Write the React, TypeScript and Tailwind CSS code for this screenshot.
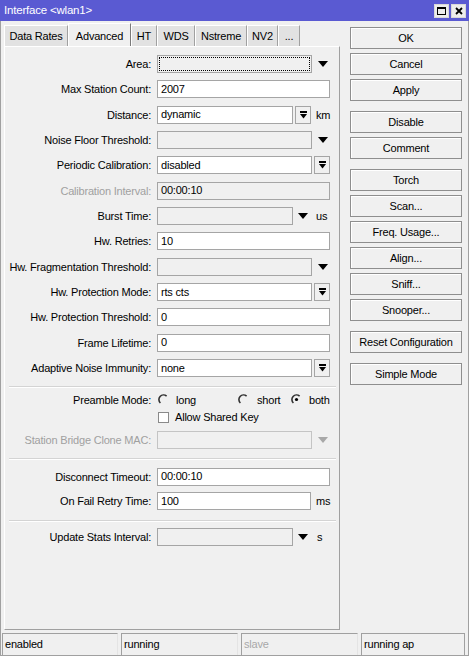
import React from "react";

const Arrow = ({ gray }: { gray?: boolean }) => (
  <svg width="10" height="6" viewBox="0 0 10 6" className="block">
    <polygon points="0,0 10,0 5,6" fill={gray ? "#a8a8a8" : "#000"} />
  </svg>
);

const BarArrow = () => (
  <svg width="7" height="8" viewBox="0 0 7 8" className="block">
    <rect x="0" y="0" width="7" height="2" fill="#000" />
    <polygon points="0,3 7,3 3.5,7.5" fill="#000" />
  </svg>
);

const ComboBtn = () => (
  <div className="h-[18px] w-[16px] border border-[#a5a5a5] bg-[#f0f0f0] flex items-center justify-center shrink-0">
    <BarArrow />
  </div>
);

function Box({
  w,
  value,
  white,
  dotted,
  faint,
}: {
  w: string;
  value?: string;
  white?: boolean;
  dotted?: boolean;
  faint?: boolean;
}) {
  return (
    <div
      className={`h-[18px] shrink-0 border ${faint ? "border-[#c4c4c4]" : "border-[#a5a5a5]"} ${
        white ? "bg-white" : "bg-[#f0f0f0]"
      } ${w} flex items-center`}
    >
      {dotted ? (
        <div className="m-[1px] h-[14px] w-full border border-dotted border-black" />
      ) : (
        <span className="pl-[3px] leading-none">{value}</span>
      )}
    </div>
  );
}

function Row({
  label,
  disabled,
  h = "h-[25.33px]",
  children,
}: {
  label?: string;
  disabled?: boolean;
  h?: string;
  children?: React.ReactNode;
}) {
  return (
    <div className={`flex items-center ${h}`}>
      <div className={`w-[146px] shrink-0 text-right ${disabled ? "text-[#a0a0a0]" : ""}`}>{label}</div>
      <div className="ml-[6px] flex items-center">{children}</div>
    </div>
  );
}

const Sep = ({ h }: { h: string }) => (
  <div className={`${h} flex items-center pl-[4px] pr-[3px]`}>
    <div className="w-full border-t border-[#d4d4d4] border-b border-b-white" />
  </div>
);

const Radio = ({ checked }: { checked?: boolean }) => (
  <svg width="11" height="11" viewBox="0 0 11 11" className="block shrink-0">
    <path d="M8.6 2.2 A4.6 4.6 0 1 0 2.4 9.0" fill="none" stroke="#303030" strokeWidth="1.6" />
    {checked && <circle cx="5.5" cy="5.5" r="1.6" fill="#000" />}
  </svg>
);

const Btn = ({ children }: { children: React.ReactNode }) => (
  <div className="h-[22px] border border-[#8e8e8e] shadow-[inset_1px_1px_0_#ffffff] flex items-center justify-center">
    {children}
  </div>
);

const Tab = ({ label, w, selected }: { label: string; w: string; selected?: boolean }) =>
  selected ? (
    <div
      className={`${w} h-[23px] bg-[#f0f0f0] border-l border-t border-white border-r border-r-[#7a7a7a] flex items-start justify-center pt-[4px]`}
    >
      {label}
    </div>
  ) : (
    <div
      className={`${w} h-[21px] bg-[#e2e2e2] border-l border-t border-white border-r border-r-[#a0a0a0] flex items-center justify-center`}
    >
      {label}
    </div>
  );

export default function App() {
  return (
    <div className="w-[469px] h-[656px] flex flex-col bg-[#f0f0f0] text-black text-[11px] tracking-[-0.2px] font-['Liberation_Sans',Arial,sans-serif] overflow-hidden">
      {/* title bar */}
      <div className="h-[21px] shrink-0 bg-[#5a5ad2] flex items-center pl-[4px] pr-[3px]">
        <span className="text-white flex-1 text-[11.5px]">{"Interface <wlan1>"}</span>
        <div className="flex gap-[2px]">
          <div className="w-[15px] h-[14px] bg-[#ececec] border border-[#d8d8d8] flex items-center justify-center">
            <svg width="9" height="8" viewBox="0 0 9 8" className="block">
              <rect x="0.5" y="0.5" width="8" height="7" fill="none" stroke="#000" />
              <rect x="0" y="0" width="9" height="2" fill="#000" />
            </svg>
          </div>
          <div className="w-[15px] h-[14px] bg-[#ececec] border border-[#d8d8d8] flex items-center justify-center">
            <svg width="8" height="8" viewBox="0 0 8 8" className="block">
              <path d="M1 1 L7 7 M7 1 L1 7" stroke="#000" strokeWidth="1.8" />
            </svg>
          </div>
        </div>
      </div>

      {/* body */}
      <div className="flex-1 flex flex-col border-x border-b border-[#a0a0a0]">
        <div className="h-[612px] flex">
          {/* left column */}
          <div className="ml-[3px] w-[336px] flex flex-col pt-[2px]">
            <div className="h-[23px] flex items-end">
              <Tab label="Data Rates" w="w-[64px]" />
              <Tab label="Advanced" w="w-[63px]" selected />
              <Tab label="HT" w="w-[26px]" />
              <Tab label="WDS" w="w-[38px]" />
              <Tab label="Nstreme" w="w-[52px]" />
              <Tab label="NV2" w="w-[31px]" />
              <Tab label="..." w="w-[22px]" />
            </div>
            <div className="h-[584px] border-l border-white border-t border-t-white border-r border-r-[#a0a0a0] border-b border-b-[#a0a0a0] flex flex-col pt-[4.5px]">
              <Row label="Area:">
                <Box w="w-[155px]" dotted />
                <div className="ml-[6px]">
                  <Arrow />
                </div>
              </Row>
              <Row label="Max Station Count:">
                <Box w="w-[173px]" white value="2007" />
              </Row>
              <Row label="Distance:">
                <Box w="w-[136px]" white value="dynamic" />
                <div className="ml-[2px]">
                  <ComboBtn />
                </div>
                <span className="ml-[5px]">km</span>
              </Row>
              <Row label="Noise Floor Threshold:">
                <Box w="w-[155px]" />
                <div className="ml-[6px]">
                  <Arrow />
                </div>
              </Row>
              <Row label="Periodic Calibration:">
                <Box w="w-[155px]" white value="disabled" />
                <div className="ml-[2px]">
                  <ComboBtn />
                </div>
              </Row>
              <Row label="Calibration Interval:" disabled>
                <Box w="w-[173px]" value="00:00:10" />
              </Row>
              <Row label="Burst Time:">
                <Box w="w-[136px]" />
                <div className="ml-[5px]">
                  <Arrow />
                </div>
                <span className="ml-[8px]">us</span>
              </Row>
              <Row label="Hw. Retries:">
                <Box w="w-[173px]" white value="10" />
              </Row>
              <Row label="Hw. Fragmentation Threshold:">
                <Box w="w-[155px]" />
                <div className="ml-[6px]">
                  <Arrow />
                </div>
              </Row>
              <Row label="Hw. Protection Mode:">
                <Box w="w-[155px]" white value="rts cts" />
                <div className="ml-[2px]">
                  <ComboBtn />
                </div>
              </Row>
              <Row label="Hw. Protection Threshold:">
                <Box w="w-[173px]" white value="0" />
              </Row>
              <Row label="Frame Lifetime:">
                <Box w="w-[173px]" white value="0" />
              </Row>
              <Row label="Adaptive Noise Immunity:">
                <Box w="w-[155px]" white value="none" />
                <div className="ml-[2px]">
                  <ComboBtn />
                </div>
              </Row>
              <Sep h="h-[11.5px]" />
              <Row label="Preamble Mode:" h="h-[15px]">
                <div className="w-[81px] flex items-center pl-[1px]">
                  <Radio />
                  <span className="ml-[7px]">long</span>
                </div>
                <div className="w-[53px] flex items-center">
                  <Radio />
                  <span className="ml-[8px]">short</span>
                </div>
                <div className="flex items-center">
                  <Radio checked />
                  <span className="ml-[7px]">both</span>
                </div>
              </Row>
              <Row h="h-[20px]">
                <div className="ml-[1px] w-[11px] h-[11px] border border-[#8a8a8a] bg-white shrink-0" />
                <span className="ml-[6px]">Allow Shared Key</span>
              </Row>
              <Row label="Station Bridge Clone MAC:" disabled h="h-[25px]">
                <Box w="w-[155px]" faint />
                <div className="ml-[6px]">
                  <Arrow gray />
                </div>
              </Row>
              <Sep h="h-[13px]" />
              <Row label="Disconnect Timeout:" h="h-[23px]">
                <Box w="w-[173px]" white value="00:00:10" />
              </Row>
              <Row label="On Fail Retry Time:" h="h-[26px]">
                <Box w="w-[154px]" white value="100" />
                <span className="ml-[5px]">ms</span>
              </Row>
              <Sep h="h-[13px]" />
              <Row label="Update Stats Interval:" h="h-[20px]">
                <Box w="w-[136px]" />
                <div className="ml-[5px]">
                  <Arrow />
                </div>
                <span className="ml-[9px]">s</span>
              </Row>
            </div>
          </div>

          {/* right column */}
          <div className="ml-[10px] w-[112px] pt-[6px] flex flex-col">
            <div className="flex flex-col gap-[4px]">
              <Btn>OK</Btn>
              <Btn>Cancel</Btn>
              <Btn>Apply</Btn>
            </div>
            <div className="mt-[10px] flex flex-col gap-[4px]">
              <Btn>Disable</Btn>
              <Btn>Comment</Btn>
            </div>
            <div className="mt-[10px] flex flex-col gap-[4px]">
              <Btn>Torch</Btn>
              <Btn>Scan...</Btn>
              <Btn>Freq. Usage...</Btn>
              <Btn>Align...</Btn>
              <Btn>Sniff...</Btn>
              <Btn>Snooper...</Btn>
            </div>
            <div className="mt-[10px]">
              <Btn>Reset Configuration</Btn>
            </div>
            <div className="mt-[10px]">
              <Btn>Simple Mode</Btn>
            </div>
          </div>
        </div>

        {/* status bar */}
        <div className="h-[22px] flex gap-[3px] pl-[1px]">
          <div className="w-[116px] border-t border-l border-[#a0a0a0] border-r border-r-[#e4e4e4] flex items-center pl-[2px]">
            enabled
          </div>
          <div className="w-[117px] border-t border-l border-[#a0a0a0] border-r border-r-[#e4e4e4] flex items-center pl-[2px]">
            running
          </div>
          <div className="w-[117px] border-t border-l border-[#a0a0a0] border-r border-r-[#e4e4e4] flex items-center pl-[2px] text-[#a8a8a8]">
            slave
          </div>
          <div className="w-[104px] border-t border-l border-[#a0a0a0] border-r border-r-[#a0a0a0] flex items-center pl-[2px]">
            running ap
          </div>
        </div>
      </div>
    </div>
  );
}
